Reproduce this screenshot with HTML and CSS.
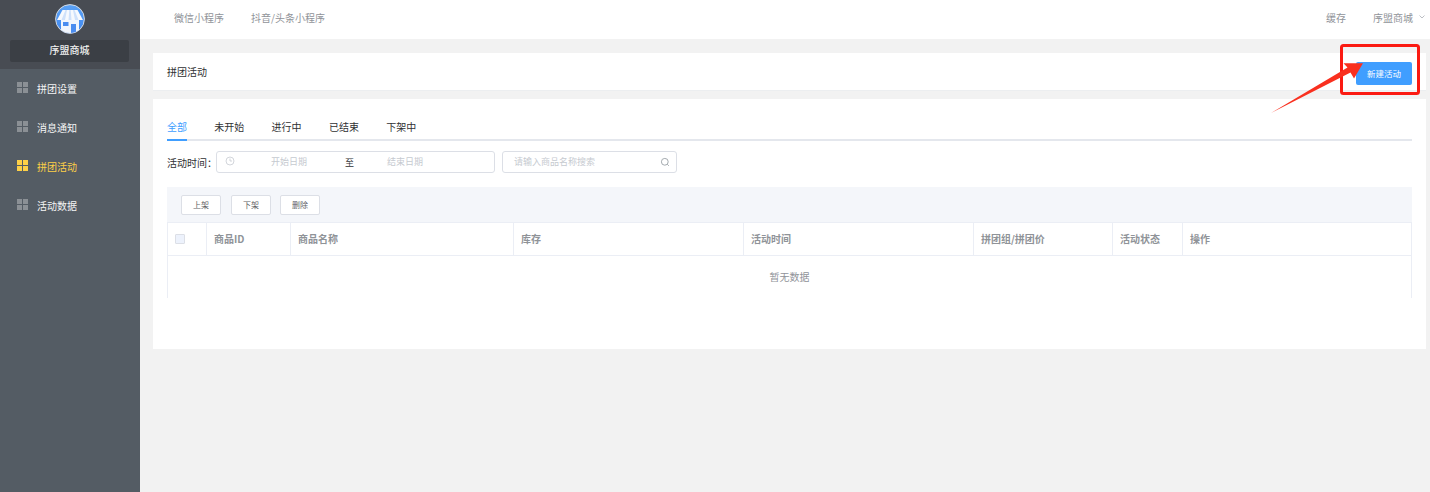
FILE: index.html
```html
<!DOCTYPE html>
<html lang="zh">
<head>
<meta charset="utf-8">
<title>拼团活动</title>
<link rel="stylesheet" href="styles.css">
</head>
<body>
<div class="app">
  <aside class="sidebar">
    <div class="brand">
      <svg class="logo" viewBox="0 0 30 30" width="30" height="30">
        <defs>
          <linearGradient id="lg" x1="0" y1="0" x2="0" y2="1"><stop offset="0" stop-color="#5ba3f7"/><stop offset="1" stop-color="#3f86ee"/></linearGradient>
          <clipPath id="cp"><circle cx="15" cy="15" r="14"/></clipPath>
        </defs>
        <circle cx="15" cy="15" r="14.400" fill="url(#lg)" stroke="#d5d8dc" stroke-width="1"/>
        <g clip-path="url(#cp)">
          <path d="M6 16h18v14H6z" fill="#f2f6fd"/>
          <path d="M7.500 6h15L28 16H2z" fill="#f6f9fe"/>
          <path d="M10.500 6h1.500L10 16H6.500zM18 6h1.500L23.500 16H20zM14.300 6h1.400L16.500 16h-3z" fill="#cfe1fb"/>
          <path d="M8 18h5.500v4H8z" fill="#4b8df0"/>
          <path d="M16 20h5v9h-5z" fill="#4b8df0"/>
        </g>
      </svg>
      <div class="shop-name">序盟商城</div>
    </div>
    <nav class="menu">
      <a class="menu-item"><span class="grid-icon"><i></i><i></i><i></i><i></i></span>拼团设置</a>
      <a class="menu-item"><span class="grid-icon"><i></i><i></i><i></i><i></i></span>消息通知</a>
      <a class="menu-item active"><span class="grid-icon"><i></i><i></i><i></i><i></i></span>拼团活动</a>
      <a class="menu-item"><span class="grid-icon"><i></i><i></i><i></i><i></i></span>活动数据</a>
    </nav>
  </aside>
  <div class="main">
    <header class="topbar">
      <div class="top-links"><span>微信小程序</span><span>抖音/头条小程序</span></div>
      <div class="top-right">
        <span>缓存</span>
        <span class="account">序盟商城
          <svg class="chev" viewBox="0 0 6 4" width="6" height="4"><path d="M.5 .5L3 3 5.500 .5" fill="none" stroke="#b4b8bd" stroke-width=".9"/></svg>
        </span>
      </div>
    </header>
    <div class="content">
      <section class="title-card">
        <span class="title-text">拼团活动</span>
        <button class="primary">新建活动</button>
      </section>
      <section class="list-card">
        <div class="tabs">
          <span class="tab on">全部</span>
          <span class="tab">未开始</span>
          <span class="tab">进行中</span>
          <span class="tab">已结束</span>
          <span class="tab">下架中</span>
        </div>
        <div class="filter">
          <span class="filter-label">活动时间：</span>
          <div class="date-range">
            <svg class="clock" viewBox="0 0 10 10" width="10" height="10"><circle cx="5" cy="5" r="4" fill="none" stroke="#c8ccd2" stroke-width=".8"/><path d="M5 2.500V5h2" fill="none" stroke="#c8ccd2" stroke-width=".8"/></svg>
            <span class="ph date-a">开始日期</span>
            <span class="to">至</span>
            <span class="ph date-b">结束日期</span>
          </div>
          <div class="search">
            <span class="ph">请输入商品名称搜索</span>
            <svg viewBox="0 0 10 10" width="10" height="10"><circle cx="4.800" cy="4.800" r="3.400" fill="none" stroke="#9aa0a6" stroke-width=".9"/><path d="M7.300 7.300l1.500 1.500" stroke="#9aa0a6" stroke-width=".9"/></svg>
          </div>
        </div>
        <div class="toolbar">
          <button class="ghost">上架</button>
          <button class="ghost">下架</button>
          <button class="ghost">删除</button>
        </div>
        <div class="table">
          <div class="thead">
            <div class="cell check"><span class="checkbox"></span></div>
            <div class="cell">商品ID</div>
            <div class="cell">商品名称</div>
            <div class="cell">库存</div>
            <div class="cell">活动时间</div>
            <div class="cell">拼团组/拼团价</div>
            <div class="cell">活动状态</div>
            <div class="cell">操作</div>
          </div>
          <div class="empty">暂无数据</div>
        </div>
      </section>
    </div>
  </div>
</div>
<svg class="annotation" viewBox="0 0 160 80" width="160" height="80">
  <rect x="71.500" y="5.500" width="77" height="48" rx="2" fill="none" stroke="#fb1a12" stroke-width="3"/>
  <path d="M1 73L77.500 27.500L73.500 23.300L93 23.300L84 38.500L80.500 32.500z" fill="#f9301f"/>
</svg>
</body>
</html>
```
FILE: styles.css
```css
* { box-sizing: border-box; }
html, body { margin: 0; height: 100%; }
body {
  font-family: "Noto Sans CJK SC", "Noto Sans", sans-serif;
  font-size: 10px;
  color: #303133;
  background: #f2f2f2;
  overflow: hidden;
}
.app { display: flex; height: 492px; }
.sidebar { width: 140px; flex: none; background: #545c64; color: #fff; }
.brand {
  height: 69px;
  background: #484c53;
  display: flex;
  flex-direction: column;
  align-items: center;
  padding: 4px 1px 0 0;
}
.logo { display: block; margin-left: 1px; }
.shop-name {
  width: 119px;
  height: 22px;
  margin-top: 6px;
  background: #3b3f45;
  border-radius: 2px;
  text-align: center;
  line-height: 20px;
  color: #f0f0f0;
  font-weight: 500;
}
.menu { display: flex; flex-direction: column; }
.menu-item {
  height: 39px;
  display: flex;
  align-items: center;
  padding-left: 17px;
  color: #f5f5f5;
  line-height: 39px;
}
.menu-item.active { color: #fdd047; }
.grid-icon {
  display: grid;
  grid-template-columns: 5px 5px;
  grid-template-rows: 5px 5px;
  gap: 1px;
  width: 11px;
  margin: 0 9px 3px 0;
}
.grid-icon i { background: #8b9095; display: block; }
.active .grid-icon i { background: #fdd047; }
.main { flex: 1; min-width: 0; display: flex; flex-direction: column; }
.topbar {
  height: 39px;
  background: #fff;
  display: flex;
  justify-content: space-between;
  align-items: center;
  color: #909399;
  padding: 0 5px 5px 34px;
}
.top-links { display: flex; gap: 27px; }
.top-right { display: flex; align-items: center; gap: 27px; }
.account { display: flex; align-items: center; gap: 6px; }
.content { padding: 14px 4px 0 13px; display: flex; flex-direction: column; gap: 8px; }
.title-card {
  height: 38px;
  background: #fff;
  display: flex;
  justify-content: space-between;
  align-items: flex-start;
  padding: 0 14px;
  border-bottom: 1px solid #eceef0;
}
.title-text { line-height: 15px; margin-top: 11px; }
button { font-family: inherit; cursor: pointer; padding: 0; }
.primary {
  width: 56px;
  height: 23px;
  margin-top: 9px;
  padding-bottom: 2px;
  background: #409eff;
  color: #fff;
  border: 0;
  border-radius: 2px;
  font-size: 8.500px;
}
.list-card {
  height: 250px;
  background: #fff;
  padding: 17px 14px 0;
}
.tabs {
  display: flex;
  gap: 27.300px;
  height: 25px;
  border-bottom: 2px solid #e4e7ed;
}
.tab { height: 25px; line-height: 22px; color: #303133; }
.tab.on { color: #409eff; border-bottom: 2px solid #409eff; }
.filter { display: flex; align-items: center; margin-top: 10px; height: 22px; }
.filter-label { width: 49px; flex: none; white-space: nowrap; }
.date-range {
  width: 279px;
  height: 22px;
  border: 1px solid #dcdfe6;
  border-radius: 3px;
  display: flex;
  align-items: center;
  padding-left: 8px;
  margin-right: 7px;
  font-size: 9px;
}
.ph { color: #c6cad0; font-size: 9px; margin-bottom: 2px; }
.clock { margin-bottom: 2px; }
.date-a { margin-left: 36px; }
.to { margin-left: 38px; width: 9px; color: #303133; }
.date-b { margin-left: 33px; }
.search {
  width: 175px;
  height: 22px;
  border: 1px solid #dcdfe6;
  border-radius: 3px;
  display: flex;
  align-items: center;
  justify-content: space-between;
  padding: 0 6px 0 11px;
}
.toolbar {
  margin-top: 14px;
  height: 35px;
  background: #f4f6fa;
  display: flex;
  align-items: center;
  gap: 10px;
  padding: 1px 0 0 14px;
}
.ghost {
  width: 40px;
  height: 20px;
  padding-bottom: 2px;
  background: #fff;
  border: 1px solid #dcdfe6;
  border-radius: 2px;
  color: #606266;
  font-size: 8px;
}
.ghost:last-child { margin-left: -1px; }
.table { border-left: 1px solid #ebeef5; border-right: 1px solid #ebeef5; height: 76px; }
.thead {
  display: grid;
  grid-template-columns: 39px 84px 223px 230px 230px 139px 70px 1fr;
  height: 34px;
  border-top: 1px solid #ebeef5;
  border-bottom: 1px solid #ebeef5;
}
.cell {
  display: flex;
  align-items: center;
  padding: 0 0 2px 7px;
  border-right: 1px solid #ebeef5;
  color: #8f9398;
  font-weight: 700;
}
.cell:last-child { border-right: 0; }
.check { padding: 0 0 0 7px; }
.checkbox {
  width: 10px;
  height: 10px;
  background: #edf2fc;
  border: 1px solid #dcdfe6;
  border-radius: 1px;
}
.empty { height: 42px; display: flex; align-items: center; justify-content: center; padding-bottom: 2px; color: #909399; }
.annotation { position: absolute; left: 1270px; top: 40px; display: block; }
```
